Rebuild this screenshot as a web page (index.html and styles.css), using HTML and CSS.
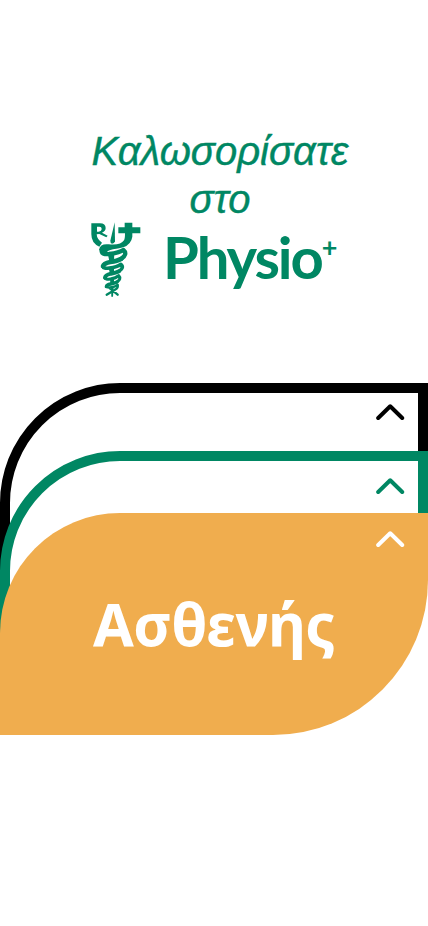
FILE: index.html
```html
<!DOCTYPE html>
<html lang="el">
<head>
<meta charset="utf-8">
<meta name="viewport" content="width=device-width, initial-scale=1">
<title>Physio+</title>
<link rel="stylesheet" href="styles.css">
</head>
<body>
<main class="page">
  <header class="welcome">
    <h1 class="greeting">Καλωσορίσατε<br>στο</h1>
    <div class="brand">
      <svg class="emblem" viewBox="33 20 150 228" aria-hidden="true">
        <g fill="currentColor">
          <path fill-rule="evenodd" d="M34 24H60Q77 24 77 38Q77 48 66 52L83 61L79 66L58 56L50 57Q51 72 66 82L58 94Q34 84 34 57ZM51 34V49H56Q65 47 65 40Q65 34 58 34Z"/>
          <path d="M104 21L105 78Q103 85 96 85Q91 84 91 76Z"/>
          <path d="M134 22H157V36H181V54H157V64Q154 86 130 96Q113 100 99 102Q82 105 78 115Q62 113 57 103Q61 84 86 87Q122 91 132 75Q135 70 135 54H115V36H134Z"/>
          <path d="M84 118L103 113L102 133L88 137Z M86 158L102 155V172L90 175Z M90 189L102 187V202L91 205Z M93 215H101L99 244H94Z"/>
        </g>
        <g fill="none" stroke="currentColor" stroke-linecap="round" stroke-linejoin="round">
          <path stroke-width="13" d="M65 108Q66 118 87 116Q119 112 130 104Q144 116 124 130"/>
          <path stroke-width="14" d="M124 130Q112 137 91 140Q71 144 69 153"/>
          <path stroke-width="11" d="M69 153Q70 161 88 158Q112 155 122 147Q134 156 117 168"/>
          <path stroke-width="12" d="M117 168Q108 173 93 175Q76 179 75 187"/>
          <path stroke-width="9" d="M75 187Q76 194 91 191Q108 189 116 181Q125 190 111 200"/>
          <path stroke-width="10" d="M111 200Q103 204 92 206Q80 208 79 214"/>
          <path stroke-width="7" d="M79 214Q87 219 103 214L113 208Q116 218 105 223L80 238M86 216L113 238"/>
        </g>
      </svg>
      <div class="wordmark">Physio<sup class="plus">+</sup></div>
    </div>
  </header>
  <nav class="cards">
    <a class="card card-black"><svg class="chevron" viewBox="0 0 30 18" aria-hidden="true"><path d="M3.2 15L15.2 3.3L27.2 15"/></svg></a>
    <a class="card card-green"><svg class="chevron" viewBox="0 0 30 18" aria-hidden="true"><path d="M3.2 15L15.2 3.3L27.2 15"/></svg></a>
    <a class="card card-patient">
      <svg class="chevron" viewBox="0 0 30 18" aria-hidden="true"><path d="M3.2 15L15.2 3.3L27.2 15"/></svg>
      <span class="label">Ασθενής</span>
    </a>
  </nav>
</main>
</body>
</html>
```
FILE: styles.css
```css
* { box-sizing: border-box; }
body {
  margin: 0;
  background: #fff;
  font-family: "Liberation Sans", Arial, sans-serif;
}
.page {
  width: 428px;
  height: 926px;
  overflow: hidden;
}
.welcome {
  height: 383px;
  padding-top: 127px;
  color: #008763;
}
.greeting {
  margin: 0;
  padding-left: 12px;
  font-size: 40px;
  font-style: italic;
  font-weight: 400;
  line-height: 48px;
  text-align: center;
  -webkit-text-stroke: 0.4px currentColor;
}
.brand {
  display: flex;
  margin-left: 91px;
}
.emblem {
  width: 50px;
  height: 76px;
  margin-top: -1px;
}
.wordmark {
  display: flex;
  margin-left: 22px;
  font-family: Lato, sans-serif;
  font-size: 58px;
  font-weight: 700;
  letter-spacing: -2.1px;
  line-height: 68px;
}
.plus {
  margin-left: 0;
  font-size: 27px;
  font-weight: 700;
  letter-spacing: 0;
  line-height: 48px;
}
.cards {
  display: flex;
  flex-direction: column;
}
.card {
  display: flex;
  flex-direction: column;
  height: 222px;
  border: 10px solid currentColor;
  border-radius: 120px 0 155px 0;
  background: #fff;
}
.card-black { color: #000; }
.card-green { margin-top: -154px; color: #008763; }
.card-patient {
  margin-top: -160px;
  border: 0;
  background: #f0ad4e;
  color: #fff;
}
.chevron {
  flex: none;
  align-self: flex-end;
  width: 30px;
  height: 18px;
  margin: 10px 13px 0 0;
  fill: none;
  stroke: currentColor;
  stroke-width: 4;
  stroke-linecap: round;
  stroke-linejoin: round;
}
.card-green .chevron { margin-top: 16px; }
.card-patient .chevron { margin: 17px 23px 0 0; }
.label {
  margin-top: 41px;
  font-family: "Noto Sans", sans-serif;
  font-size: 59px;
  font-weight: 700;
  letter-spacing: -0.6px;
  line-height: 69px;
  text-align: center;
}
```
